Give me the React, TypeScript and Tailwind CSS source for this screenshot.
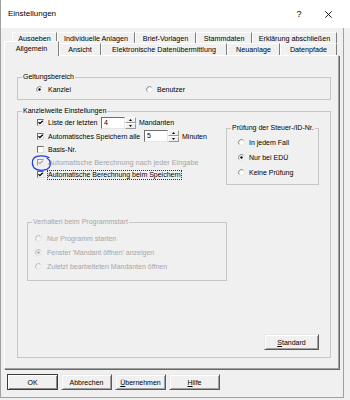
import React from 'react';

function Check({ checked = false, disabled = false }: { checked?: boolean; disabled?: boolean }) {
  return (
    <span
      className={
        disabled
          ? 'flex h-[7px] w-[7px] shrink-0 items-center justify-center border border-t-[#9a9a9a] border-l-[#9a9a9a] border-r-[#e8e8e8] border-b-[#e8e8e8] bg-[#f4f4f4]'
          : 'flex h-[7px] w-[7px] shrink-0 items-center justify-center border border-t-[#6e6e6e] border-l-[#6e6e6e] border-r-[#dedede] border-b-[#dedede] bg-white'
      }
    >
      {checked && (
        <svg width="5" height="5" viewBox="0 0 5 5">
          <path d="M0.4 2.1 L1.9 3.6 L4.7 0.8" fill="none" stroke={disabled ? '#a8a8a8' : '#000'} strokeWidth="1.3" />
        </svg>
      )}
    </span>
  );
}

function Radio({ checked = false, disabled = false }: { checked?: boolean; disabled?: boolean }) {
  return (
    <svg width="7" height="7" viewBox="0 0 7 7" className="shrink-0">
      <circle cx="3.5" cy="3.5" r="3" fill={disabled ? '#f4f4f4' : '#fff'} />
      <path d="M1.38 5.62 A3 3 0 0 1 5.62 1.38" fill="none" stroke={disabled ? '#b4b4b4' : '#7a7a7a'} strokeWidth="1" />
      <path d="M5.62 1.38 A3 3 0 0 1 1.38 5.62" fill="none" stroke="#e2e2e2" strokeWidth="1" />
      {checked && <circle cx="3.5" cy="3.5" r="1.2" fill={disabled ? '#a8a8a8' : '#000'} />}
    </svg>
  );
}

function Spin({ value }: { value: string }) {
  return (
    <div className="flex h-[12px] shrink-0">
      <div className="h-[12px] w-[24px] border border-t-[#6e6e6e] border-l-[#6e6e6e] border-r-[#e6e6e6] border-b-[#e6e6e6] bg-white pl-[2px] leading-[10px]">
        {value}
      </div>
      <div className="flex h-[12px] w-[11px] flex-col">
        <div className="flex h-[6px] items-center justify-center border border-t-white border-l-white border-r-[#9a9a9a] border-b-[#9a9a9a] bg-[#f0f0f0]">
          <svg width="3" height="2" viewBox="0 0 3 2">
            <path d="M0 2 L1.5 0 L3 2Z" fill="#000" />
          </svg>
        </div>
        <div className="flex h-[6px] items-center justify-center border border-t-white border-l-white border-r-[#9a9a9a] border-b-[#9a9a9a] bg-[#f0f0f0]">
          <svg width="3" height="2" viewBox="0 0 3 2">
            <path d="M0 0 L1.5 2 L3 0Z" fill="#000" />
          </svg>
        </div>
      </div>
    </div>
  );
}

function Tab({ label, w }: { label: string; w: string }) {
  return (
    <div
      className={`${w} flex h-full items-center justify-center whitespace-nowrap border-t border-l border-r border-t-white border-l-white border-r-[#7e7e7e]`}
    >
      {label}
    </div>
  );
}

function Btn({ children, def = false, w = 'w-[51px]' }: { children: React.ReactNode; def?: boolean; w?: string }) {
  return (
    <div
      className={
        def
          ? `${w} flex h-[16px] items-center justify-center border border-[#3c3c3c] bg-[#f0f0f0] shadow-[inset_1px_1px_0_#ffffff,inset_-1px_-1px_0_#8a8a8a]`
          : `${w} flex h-[16px] items-center justify-center border border-t-[#e8e8e8] border-l-[#e8e8e8] border-r-[#5a5a5a] border-b-[#5a5a5a] bg-[#f0f0f0] shadow-[inset_1px_1px_0_#ffffff,inset_-1px_-1px_0_#a0a0a0]`
      }
    >
      {children}
    </div>
  );
}

export default function App() {
  return (
    <div className="h-[400px] w-[350px] overflow-hidden bg-[#f0f0f0] font-['Liberation_Sans',Arial,sans-serif] text-[7px] leading-[9px] text-black">
      {/* Title bar */}
      <div className="flex h-[28px] items-center border-l border-[#a0a0a0] bg-white">
        <span className="pl-[7px] text-[8px] leading-[10px]">Einstellungen</span>
        <div className="ml-auto flex items-center">
          <span className="w-[10px] text-center text-[9px] leading-[10px]">?</span>
          <svg width="7" height="7" viewBox="0 0 7 7" className="ml-[21px] mr-[18px]">
            <path d="M0.3 0.3 L6.7 6.7 M6.7 0.3 L0.3 6.7" stroke="#000" strokeWidth="0.9" />
          </svg>
        </div>
      </div>

      {/* Window body */}
      <div className="h-[370px] w-[344px] border-l border-r border-b border-[#a0a0a0] pl-[3px] pt-[4px]">
        {/* Tabs row 1 */}
        <div className="flex h-[11px] pl-[8px] text-[7.2px]">
          <Tab label="Ausgeben" w="w-[45px]" />
          <Tab label="Individuelle Anlagen" w="w-[78px]" />
          <Tab label="Brief-Vorlagen" w="w-[61px]" />
          <Tab label="Stammdaten" w="w-[56px]" />
          <Tab label="Erklärung abschließen" w="w-[85px]" />
        </div>
        {/* Tabs row 2 */}
        <div className="flex h-[12px] items-end text-[7.2px]">
          <div className="relative z-10 -mb-[1px] flex h-[15px] w-[55px] items-start justify-center border-t border-l border-r border-t-white border-l-white border-r-[#7e7e7e] bg-[#f0f0f0] pt-[2px]">
            Allgemein
          </div>
          <div className="flex h-full">
            <Tab label="Ansicht" w="w-[42px]" />
            <Tab label="Elektronische Datenübermittlung" w="w-[126px]" />
            <Tab label="Neuanlage" w="w-[53px]" />
            <Tab label="Datenpfade" w="w-[57px]" />
          </div>
        </div>

        {/* Panel */}
        <div className="h-[314px] w-[335px] border border-t-white border-l-white border-r-[#a0a0a0] border-b-[#a0a0a0] shadow-[1px_1px_0_0_#696969]">
          {/* Geltungsbereich */}
          <fieldset className="ml-[12px] mt-[17px] h-[27px] w-[314px] border border-[#c6c6c6]">
            <legend className="ml-[4px] px-[1px] leading-[8px]">Geltungsbereich</legend>
            <div className="mt-[4px] flex h-[9px] items-center pl-[18px]">
              <div className="flex w-[110px] items-center gap-[5px]">
                <Radio checked />
                <span>Kanzlei</span>
              </div>
              <div className="flex items-center gap-[4px]">
                <Radio />
                <span>Benutzer</span>
              </div>
            </div>
          </fieldset>

          {/* Kanzleiweite Einstellungen */}
          <fieldset className="ml-[12px] mt-[7px] h-[251px] w-[314px] border border-[#c6c6c6]">
            <legend className="ml-[4px] px-[1px] leading-[8px]">Kanzleiweite Einstellungen</legend>
            <div className="flex">
              <div className="w-[208px] pl-[19px]">
                <div className="mt-[1px] flex h-[13px] items-center">
                  <Check checked />
                  <span className="ml-[4px] w-[53px] whitespace-nowrap">Liste der letzten</span>
                  <Spin value="4" />
                  <span className="ml-[3px]">Mandanten</span>
                </div>
                <div className="flex h-[14px] items-center">
                  <Check checked />
                  <span className="ml-[4px] w-[96px] whitespace-nowrap">Automatisches Speichern alle</span>
                  <Spin value="5" />
                  <span className="ml-[3px]">Minuten</span>
                </div>
                <div className="flex h-[13px] items-center">
                  <Check />
                  <span className="ml-[4px]">Basis-Nr.</span>
                </div>
                <div className="relative flex h-[12px] items-center">
                  <Check checked disabled />
                  <span className="ml-[4px] whitespace-nowrap text-[7.3px] text-[#a6a6a6]">Automatische Berechnung nach jeder Eingabe</span>
                  <svg width="21" height="17" viewBox="0 0 21 17" className="absolute left-[-6px] top-[-1px]">
                    <path
                      d="M18 2.5 C14 0.3, 6 0.2, 3 3 C0.4 5.6, 0.6 12, 5 14.2 C9 16.2, 16 15.4, 18.3 12.3 C20 9.6, 19.6 5, 16.2 3.2"
                      fill="none"
                      stroke="#1f3ee6"
                      strokeWidth="1.3"
                      strokeLinecap="round"
                    />
                  </svg>
                </div>
                <div className="flex h-[13px] items-center">
                  <Check checked />
                  <span className="ml-[3px] whitespace-nowrap border border-dotted border-[#333] leading-[8px]">
                    Automatische Berechnung beim Speichern
                  </span>
                </div>
              </div>

              {/* Prüfung */}
              <fieldset className="mt-[9px] h-[61px] w-[93px] border border-[#c6c6c6]">
                <legend className="ml-[4px] px-[1px] leading-[8px] whitespace-nowrap">Prüfung der Steuer-/ID-Nr.</legend>
                <div className="mt-[3px] pl-[11px]">
                  <div className="flex h-[15px] items-center gap-[4px]">
                    <Radio />
                    <span>In jedem Fall</span>
                  </div>
                  <div className="flex h-[15px] items-center gap-[4px]">
                    <Radio checked />
                    <span>Nur bei EDÜ</span>
                  </div>
                  <div className="flex h-[15px] items-center gap-[4px]">
                    <Radio />
                    <span>Keine Prüfung</span>
                  </div>
                </div>
              </fieldset>
            </div>

            {/* Verhalten beim Programmstart */}
            <fieldset className="ml-[9px] mt-[33px] h-[63px] w-[200px] border border-[#c6c6c6] text-[#a6a6a6]">
              <legend className="ml-[4px] px-[1px] leading-[8px]">Verhalten beim Programmstart</legend>
              <div className="mt-[5px] pl-[7px]">
                <div className="flex h-[14px] items-center gap-[5px]">
                  <Radio disabled />
                  <span>Nur Programm starten</span>
                </div>
                <div className="flex h-[14px] items-center gap-[5px]">
                  <Radio checked disabled />
                  <span>Fenster 'Mandant öffnen' anzeigen</span>
                </div>
                <div className="flex h-[14px] items-center gap-[5px]">
                  <Radio disabled />
                  <span>Zuletzt bearbeiteten Mandanten öffnen</span>
                </div>
              </div>
            </fieldset>

            <div className="mt-[53px] flex justify-end pr-[11px]">
              <Btn w="w-[55px]">
                <span>
                  <span className="underline">S</span>tandard
                </span>
              </Btn>
            </div>
          </fieldset>
        </div>

        {/* Bottom buttons */}
        <div className="mt-[5px] flex gap-[3px] pl-[3px]">
          <Btn def>OK</Btn>
          <Btn>Abbrechen</Btn>
          <Btn>
            <span>
              <span className="underline">Ü</span>bernehmen
            </span>
          </Btn>
          <Btn>
            <span>
              <span className="underline">H</span>ilfe
            </span>
          </Btn>
        </div>
      </div>
    </div>
  );
}
